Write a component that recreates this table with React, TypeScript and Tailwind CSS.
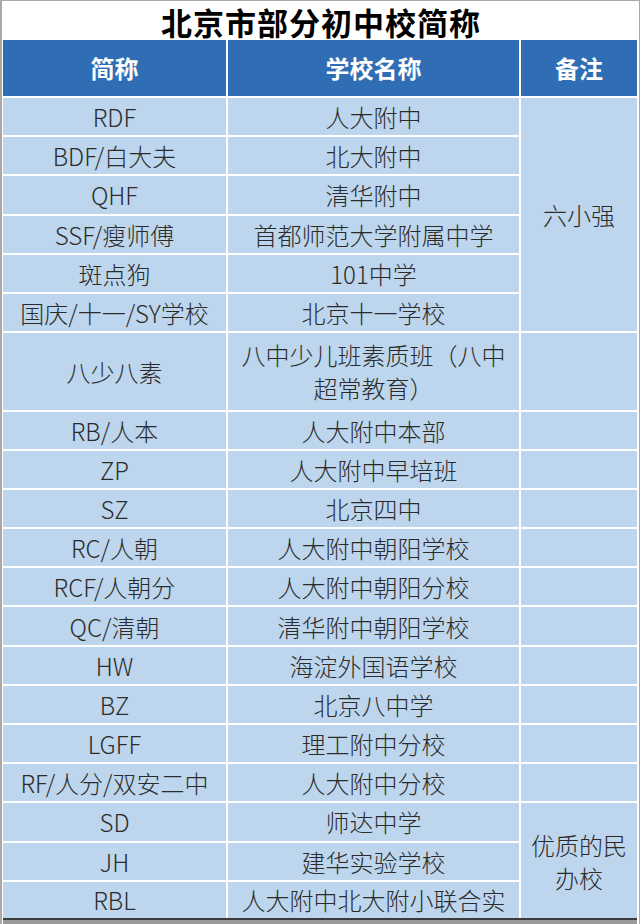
import React from "react";

const rowsTop: [string, string][] = [
  ["RDF", "人大附中"],
  ["BDF/白大夫", "北大附中"],
  ["QHF", "清华附中"],
  ["SSF/瘦师傅", "首都师范大学附属中学"],
  ["斑点狗", "101中学"],
  ["国庆/十一/SY学校", "北京十一学校"],
];

const rowsMid: [string, string][] = [
  ["RB/人本", "人大附中本部"],
  ["ZP", "人大附中早培班"],
  ["SZ", "北京四中"],
  ["RC/人朝", "人大附中朝阳学校"],
  ["RCF/人朝分", "人大附中朝阳分校"],
  ["QC/清朝", "清华附中朝阳学校"],
  ["HW", "海淀外国语学校"],
  ["BZ", "北京八中学"],
  ["LGFF", "理工附中分校"],
  ["RF/人分/双安二中", "人大附中分校"],
];

const cell =
  "bg-[#bdd6ed] flex items-center justify-center text-center text-[24px] leading-[33px] font-light text-[#2b2b2b] overflow-hidden";
const head =
  "bg-[#2f6eb5] flex items-center justify-center text-white text-[24px] font-bold";

export default function App() {
  return (
    <div className="w-[640px] h-[924px] overflow-hidden bg-white border-l-2 border-t border-r border-[#a9a9a9] pl-px font-['Noto_Sans_CJK_SC','Noto_Sans',sans-serif]">
      <div className="h-[39px] flex items-center justify-center pt-[2px]">
        <span className="text-[31px] font-bold text-black leading-none tracking-[1px]">
          北京市部分初中校简称
        </span>
      </div>
      <div className="w-[634px] grid grid-cols-[223px_291px_116px] grid-rows-[56px_repeat(6,37.2px)_76.4px_repeat(12,37.2px)_36px] gap-[2px] bg-white">
        <div className={head}>简称</div>
        <div className={head}>学校名称</div>
        <div className={head}>备注</div>

        {rowsTop.map(([a, b], i) => (
          <React.Fragment key={"t" + i}>
            <div className={cell}>{a}</div>
            <div className={cell}>{b}</div>
            {i === 0 && <div className={cell + " row-span-6"}>六小强</div>}
          </React.Fragment>
        ))}

        <div className={cell}>八少八素</div>
        <div className={cell}>
          <span>
            八中少儿班素质班（八中
            <br />
            超常教育）
          </span>
        </div>
        <div className={cell} />

        {rowsMid.map(([a, b], i) => (
          <React.Fragment key={"m" + i}>
            <div className={cell}>{a}</div>
            <div className={cell}>{b}</div>
            <div className={cell} />
          </React.Fragment>
        ))}

        <div className={cell}>SD</div>
        <div className={cell}>师达中学</div>
        <div className={cell + " row-span-3"}>
          <span>
            优质的民
            <br />
            办校
          </span>
        </div>
        <div className={cell}>JH</div>
        <div className={cell}>建华实验学校</div>
        <div className={cell}>RBL</div>
        <div className="bg-[#bdd6ed] flex items-start justify-center text-center text-[24px] leading-[33px] font-light text-[#2b2b2b] overflow-hidden pt-px">
          <span>
            人大附中北大附小联合实
            <br />
            验学校
          </span>
        </div>
      </div>
      <div className="w-[634px] h-[2px] bg-[#3a3a3a]" />
      <div className="w-[634px] h-[4px] bg-[#9a9a9a]" />
    </div>
  );
}
